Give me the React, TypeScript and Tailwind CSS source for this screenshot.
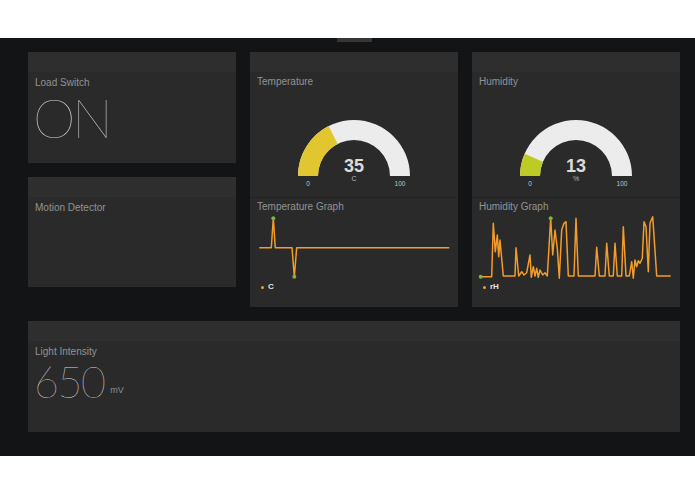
import React from 'react';

// sparkline points, in svg coordinates (208 x 68)
const tempPoints: [number, number][] = [
  [9.3, 35.7], [21.3, 35.7], [23.3, 6.3], [25.3, 35.7], [42, 35.7], [44.3, 64.7], [46.7, 35.7], [199.3, 35.7],
];

const humPoints: [number, number][] = [
  [8.7, 64.7], [19.7, 64.7], [21.3, 11.3], [23.3, 39.7], [25.3, 23], [26.7, 44.7], [28, 28], [31.3, 64],
  [43, 64], [44, 35.7], [46.7, 64], [49.7, 59.7], [52, 63], [54.7, 60.7], [58, 43], [59.3, 65.3],
  [61.3, 54.7], [63, 64], [64.7, 56.3], [66.3, 65.3], [68, 58], [70.7, 63], [73, 60.7], [75.3, 64],
  [78.7, 6.3], [80.7, 43], [83, 18], [85.3, 36.3], [87.3, 66.3], [89.7, 18], [92, 11.3], [94, 9.7],
  [96.3, 64], [102, 64], [104, 6.3], [106.3, 64], [123, 64], [124.7, 35.3], [127.3, 64], [133, 64],
  [134.7, 31.3], [137.3, 64], [141.3, 64], [143, 31.3], [145.3, 64], [149.7, 64], [151.3, 14.7], [154, 64],
  [157.3, 64], [159.7, 49.7], [161.3, 66.3], [163, 48], [164.7, 54.7], [166.3, 48.7], [168, 51.3], [170.3, 46.3],
  [172, 9.7], [174, 14.7], [176.3, 59.7], [178, 11.3], [180.7, 4.7], [184.7, 64], [198.7, 64],
];

function pt(cx: number, cy: number, rad: number, deg: number) {
  const a = (deg * Math.PI) / 180;
  return `${(cx + rad * Math.cos(a)).toFixed(2)} ${(cy - rad * Math.sin(a)).toFixed(2)}`;
}

function band(cx: number, cy: number, R: number, r: number, a0: number, a1: number) {
  return `M ${pt(cx, cy, R, a0)} A ${R} ${R} 0 0 1 ${pt(cx, cy, R, a1)} L ${pt(cx, cy, r, a1)} A ${r} ${r} 0 0 0 ${pt(cx, cy, r, a0)} Z`;
}

function Card({ className = '', children }: { className?: string; children?: React.ReactNode }) {
  return (
    <div className={`bg-[#2a2a2a] flex flex-col ${className}`}>
      <div className="h-[20px] shrink-0 bg-[#2e2e2e]" />
      {children}
    </div>
  );
}

function Title({ children }: { children: React.ReactNode }) {
  return <div className="pl-[7px] pt-[5px] text-[10px] leading-[12px] text-[#939393]">{children}</div>;
}

function Gauge({ title, value, unit, color }: { title: string; value: number; unit: string; color: string }) {
  const cx = 104;
  const cy = 88;
  const split = 180 - (value / 100) * 180;
  return (
    <div className="h-[125px] flex flex-col">
      <div className="pl-[7px] pt-[4px] text-[10px] leading-[12px] text-[#939393]">{title}</div>
      <svg width="208" height="109" viewBox="0 0 208 109">
        <path d={band(cx, cy, 56, 36, 180, 0)} fill="#ececec" />
        <path d={band(cx, cy, 56, 36, 180, split)} fill={color} />
        <text x={cx} y={84} textAnchor="middle" fontSize="18" fontWeight="700" fill="#dcdcdc" fontFamily="Liberation Sans, Arial, sans-serif">
          {value}
        </text>
        <text x={cx} y={93} textAnchor="middle" fontSize="7" fill="#b8b8b8" fontFamily="Liberation Sans, Arial, sans-serif">
          {unit}
        </text>
        <text x={cx - 46} y={98} textAnchor="middle" fontSize="6.5" fill="#c4c4c4" fontFamily="Liberation Sans, Arial, sans-serif">
          0
        </text>
        <text x={cx + 46} y={98} textAnchor="middle" fontSize="6.5" fill="#c4c4c4" fontFamily="Liberation Sans, Arial, sans-serif">
          100
        </text>
      </svg>
    </div>
  );
}

function Spark({ title, points, dots, legend }: { title: string; points: [number, number][]; dots: [number, number][]; legend: string }) {
  return (
    <div className="flex flex-col border-t border-[#222222] h-[110px]">
      <div className="pl-[7px] pt-[3px] text-[10px] leading-[12px] text-[#939393]">{title}</div>
      <svg width="208" height="67" viewBox="0 1 208 67">
        <polyline points={points.map((p) => p.join(',')).join(' ')} fill="none" stroke="#f39c2b" strokeWidth="1.5" strokeLinejoin="round" />
        {dots.map(([x, y], i) => (
          <circle key={i} cx={x} cy={y} r="2" fill="#7cb342" />
        ))}
      </svg>
      <div className="flex items-center gap-[4px] pl-[11px] mt-[2px] text-[8px] leading-[10px] font-bold text-[#e6e6e6]">
        <span className="w-[3px] h-[3px] rounded-full bg-[#f39c2b]" />
        {legend}
      </div>
    </div>
  );
}

export default function App() {
  return (
    <div className="w-[695px] h-[494px] bg-white flex flex-col font-['Liberation_Sans',Arial,sans-serif]">
      <div className="h-[38px] shrink-0" />
      <div className="h-[418px] shrink-0 bg-[#131416] flex flex-col">
        <div className="ml-[337px] w-[35px] h-[4px] bg-[#363636]" />
        <div className="pl-[28px] pr-[15px] pt-[10px] flex flex-col gap-[14px]">
          <div className="flex gap-[14px] items-start">
            <div className="w-[208px] flex flex-col gap-[14px]">
              <Card className="h-[111px]">
                <Title>Load Switch</Title>
                <div className="pl-[5px] mt-[2px] font-['Lato',sans-serif] font-thin text-[54px] leading-none tracking-[-3px] text-[#d6d6d6]">
                  ON
                </div>
              </Card>
              <Card className="h-[110px]">
                <Title>Motion Detector</Title>
              </Card>
            </div>
            <Card className="w-[208px] h-[255px]">
              <Gauge title="Temperature" value={35} unit="C" color="#e1c62f" />
              <Spark title="Temperature Graph" points={tempPoints} dots={[[23.3, 6.3], [44.3, 64.7]]} legend="C" />
            </Card>
            <Card className="w-[208px] h-[255px]">
              <Gauge title="Humidity" value={13} unit="%" color="#bccc24" />
              <Spark title="Humidity Graph" points={humPoints} dots={[[8.7, 64.7], [78.7, 6.3]]} legend="rH" />
            </Card>
          </div>
          <Card className="h-[111px]">
            <Title>Light Intensity</Title>
            <div className="flex items-end gap-[6px] pl-[6px] mt-[2px]">
              <span className="font-['Lato',sans-serif] font-thin text-[43px] leading-none tracking-[-1.5px] text-[#d6d6d6]">650</span>
              <span className="text-[9px] leading-[9px] mb-[8px] text-[#8f8f8f]">mV</span>
            </div>
          </Card>
        </div>
      </div>
      <div className="h-[38px] shrink-0" />
    </div>
  );
}
